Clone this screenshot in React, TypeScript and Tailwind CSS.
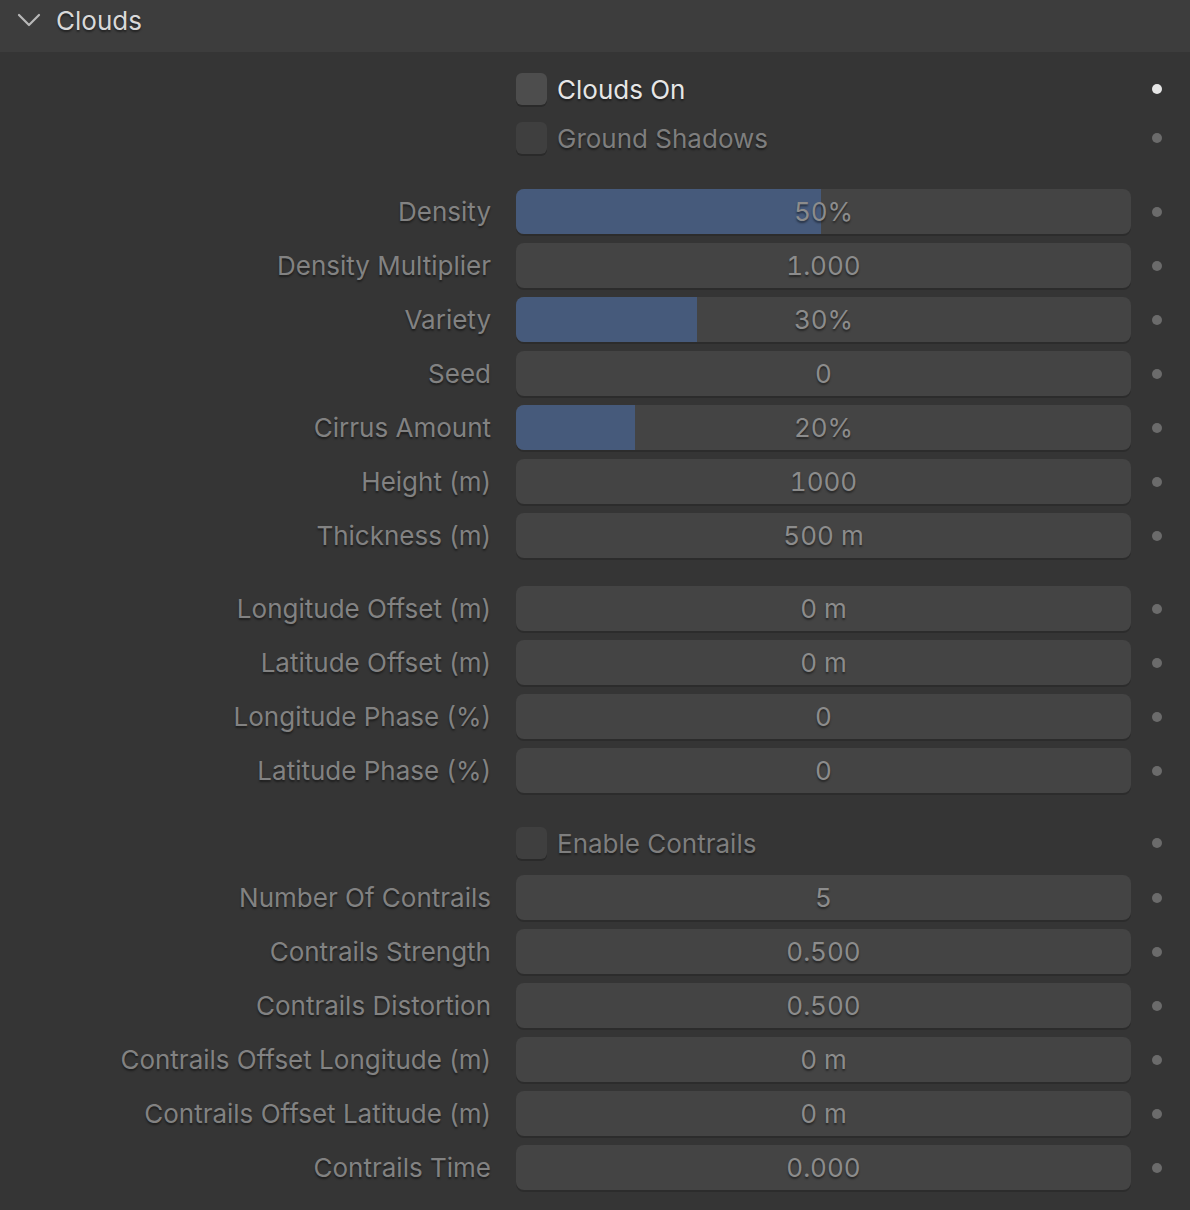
import React from "react";

type Field = { label: string; value: string; fill?: number };

const shadowText = "[text-shadow:0_2px_2px_rgba(0,0,0,0.45)]";

function Dot({ bright }: { bright?: boolean }) {
  return (
    <div className="flex-1 flex items-center">
      <div
        className={
          "ml-[21px] w-[10px] h-[10px] rounded-full " +
          (bright ? "bg-[#e6e6e6]" : "bg-[#6b6b6b]")
        }
      />
    </div>
  );
}

function FieldRow({ f }: { f: Field }) {
  return (
    <div className="flex items-center h-[45px]">
      <div
        className={
          "w-[516px] pr-[25px] text-right text-[26px] text-[#828282] whitespace-nowrap " +
          shadowText
        }
      >
        {f.label}
      </div>
      <div className="relative w-[615px] h-[45px] rounded-[8px] bg-[#444444] shadow-[0_2px_0_#2c2c2c] overflow-hidden">
        {f.fill !== undefined && (
          <div
            className="absolute left-0 top-0 bottom-0 bg-[#465a7b]"
            style={{ width: `${f.fill}%` }}
          />
        )}
        <div
          className={
            "relative h-full flex items-center justify-center text-[26px] text-[#8c8c8c] tabular-nums " +
            shadowText
          }
        >
          {f.value}
        </div>
      </div>
      <Dot />
    </div>
  );
}

function CheckRow({
  label,
  enabled,
}: {
  label: string;
  enabled?: boolean;
}) {
  return (
    <div className="flex items-center h-[32px]">
      <div className="w-[516px]" />
      <div className="w-[615px] flex items-center">
        <div
          className={
            "w-[31px] h-[32px] rounded-[6px] shadow-[0_2px_0_#2a2a2a] " +
            (enabled ? "bg-[#4d4d4d]" : "bg-[#3f3f3f]")
          }
        />
        <span
          className={
            "ml-[10px] text-[26px] whitespace-nowrap " +
            shadowText +
            " " +
            (enabled ? "text-[#e6e6e6]" : "text-[#7e7e7e]")
          }
        >
          {label}
        </span>
      </div>
      <Dot bright={enabled} />
    </div>
  );
}

const group1: Field[] = [
  { label: "Density", value: "50%", fill: 49.6 },
  { label: "Density Multiplier", value: "1.000" },
  { label: "Variety", value: "30%", fill: 29.4 },
  { label: "Seed", value: "0" },
  { label: "Cirrus Amount", value: "20%", fill: 19.4 },
  { label: "Height (m)", value: "1000" },
  { label: "Thickness (m)", value: "500 m" },
];

const group2: Field[] = [
  { label: "Longitude Offset (m)", value: "0 m" },
  { label: "Latitude Offset (m)", value: "0 m" },
  { label: "Longitude Phase (%)", value: "0" },
  { label: "Latitude Phase (%)", value: "0" },
];

const group3: Field[] = [
  { label: "Number Of Contrails", value: "5" },
  { label: "Contrails Strength", value: "0.500" },
  { label: "Contrails Distortion", value: "0.500" },
  { label: "Contrails Offset Longitude (m)", value: "0 m" },
  { label: "Contrails Offset Latitude (m)", value: "0 m" },
  { label: "Contrails Time", value: "0.000" },
];

export default function App() {
  return (
    <div
      className="w-[1190px] h-[1210px] bg-[#353535] overflow-hidden"
      style={{ fontFamily: "Inter, 'Noto Sans', sans-serif" }}
    >
      <div className="h-[52px] bg-[#3d3d3d] flex items-center pb-[12px]">
        <svg
          className="ml-[17px]"
          width="24"
          height="16"
          viewBox="0 0 24 16"
          fill="none"
        >
          <polyline
            points="2,3 12,13 22,3"
            stroke="#b8b8b8"
            strokeWidth="2.2"
            strokeLinecap="round"
            strokeLinejoin="round"
          />
        </svg>
        <span
          className={"ml-[15px] text-[26px] text-[#d9d9d9] " + shadowText}
        >
          Clouds
        </span>
      </div>

      <div className="pt-[21px] flex flex-col">
        <CheckRow label="Clouds On" enabled />
        <div className="mt-[17px]">
          <CheckRow label="Ground Shadows" />
        </div>

        <div className="mt-[35px] flex flex-col gap-[9px]">
          {group1.map((f) => (
            <FieldRow key={f.label} f={f} />
          ))}
        </div>

        <div className="mt-[28px] flex flex-col gap-[9px]">
          {group2.map((f) => (
            <FieldRow key={f.label} f={f} />
          ))}
        </div>

        <div className="mt-[34px]">
          <CheckRow label="Enable Contrails" />
        </div>

        <div className="mt-[16px] flex flex-col gap-[9px]">
          {group3.map((f) => (
            <FieldRow key={f.label} f={f} />
          ))}
        </div>
      </div>
    </div>
  );
}
